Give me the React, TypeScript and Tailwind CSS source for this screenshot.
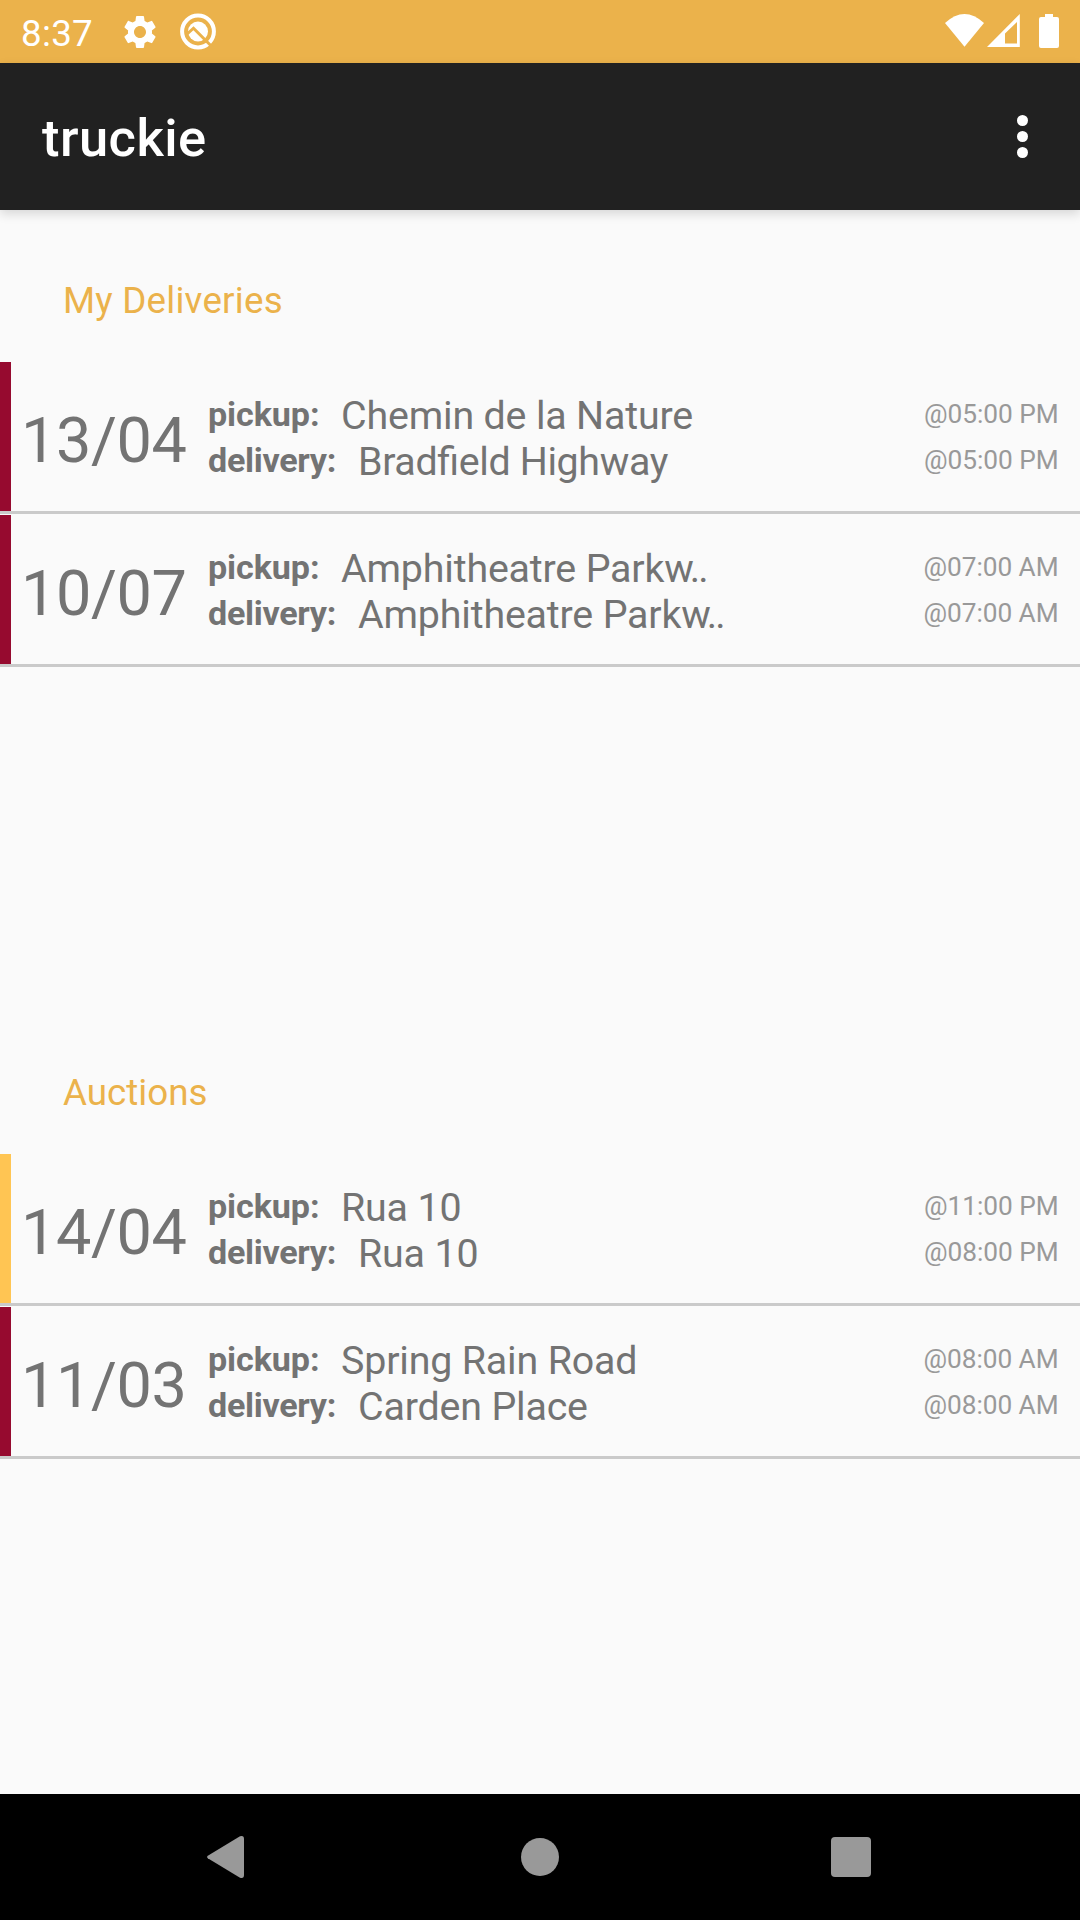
import React from "react";
import { MdSettings } from "react-icons/md";

type Delivery = {
  date: string;
  pickup: string;
  delivery: string;
  pickupTime: string;
  deliveryTime: string;
  accent: string;
};

const RED = "bg-[#960a2f]";
const YELLOW = "bg-[#ffc553]";

const deliveries: Delivery[] = [
  { date: "13/04", pickup: "Chemin de la Nature", delivery: "Bradfield Highway", pickupTime: "@05:00 PM", deliveryTime: "@05:00 PM", accent: RED },
  { date: "10/07", pickup: "Amphitheatre Parkw..", delivery: "Amphitheatre Parkw..", pickupTime: "@07:00 AM", deliveryTime: "@07:00 AM", accent: RED },
];

const auctions: Delivery[] = [
  { date: "14/04", pickup: "Rua 10", delivery: "Rua 10", pickupTime: "@11:00 PM", deliveryTime: "@08:00 PM", accent: YELLOW },
  { date: "11/03", pickup: "Spring Rain Road", delivery: "Carden Place", pickupTime: "@08:00 AM", deliveryTime: "@08:00 AM", accent: RED },
];

function StatusBar() {
  return (
    <header className="flex h-[63px] items-start bg-[#ebb24b] text-white">
      <span className="ml-[21px] mt-[12px] w-[99px] text-[36.75px] leading-[43px] tracking-[0.3px]">8:37</span>
      <MdSettings className="mt-[12px] size-[40px]" />
      <svg className="ml-[14px] mt-[8px] size-[48px]" viewBox="0 0 48 48" fill="none">
        <circle cx="24" cy="23.5" r="15.9" stroke="#fff" strokeWidth="4" />
        <circle cx="24" cy="23.5" r="10" fill="#fff" />
        <path d="M12 27 19.500 20.200 40 40.700" stroke="#ebb24b" strokeWidth="3" />
      </svg>
      <svg className="ml-auto mr-[18px] mt-[12px] h-[40px] w-[120px]" viewBox="0 0 120 40" fill="#fff">
        <path d="M3 11Q22.500-7 42 11L22.500 34.800z" />
        <path fillRule="evenodd" d="M45 35 77.800 2v33zM63 21.500V31.500H75V10z" />
        <path d="M103 2h8v3h4a2 2 0 0 1 2 2v27a2 2 0 0 1-2 2H99a2 2 0 0 1-2-2V7a2 2 0 0 1 2-2h4z" />
      </svg>
    </header>
  );
}

function AppBar() {
  return (
    <div className="relative flex h-[147px] items-center justify-between bg-[#212121] pl-[42px] pr-[52px] text-white shadow-[0_4px_10px_rgba(0,0,0,0.14)]">
      <h1 className="pt-[3px] text-[52.5px] font-medium leading-[62px] tracking-[0.45px]">truckie</h1>
      <div className="flex flex-col gap-[5px]">
        <span className="size-[11px] rounded-full bg-white" />
        <span className="size-[11px] rounded-full bg-white" />
        <span className="size-[11px] rounded-full bg-white" />
      </div>
    </div>
  );
}

/** Street name; a clipped name ends in two tightly set dots. */
function Street({ name }: { name: string }) {
  const clipped = name.endsWith("w..");
  const tracking = name.includes("fi") ? "tracking-[-0.36px]" : "tracking-[-0.17px]";
  return (
    <span className={`mt-px text-[39.375px] [font-feature-settings:'liga'_1] ${tracking}`}>
      {clipped ? name.slice(0, -3) : name}
      {clipped && <span className="tracking-[-1.8px]">w..</span>}
    </span>
  );
}

function Row({ item }: { item: Delivery }) {
  return (
    <li className="mb-px flex h-[152px] border-b-[3px] border-[#cacaca] text-[#737373]">
      <div className={`w-[11px] ${item.accent}`} />
      <div className="w-[197px] pl-[10px] pt-[42px] text-[63px] leading-[74px] tracking-[-0.4px]">{item.date}</div>
      <div className="flex-1 pt-[30px]">
        <div className="flex h-[46px] items-start leading-[46px]">
          <b className="-mt-px w-[133px] text-[34.125px] font-bold tracking-[-0.1px]">pickup:</b>
          <Street name={item.pickup} />
        </div>
        <div className="flex h-[46px] items-start leading-[46px]">
          <b className="-mt-px w-[150px] text-[34.125px] font-bold tracking-[-0.3px]">delivery:</b>
          <Street name={item.delivery} />
        </div>
      </div>
      <div className="pr-[21.5px] pt-[29px] text-right text-[26.25px] leading-[46px] tracking-[-0.06px] text-[#999999]">
        <div>{item.pickupTime}</div>
        <div>{item.deliveryTime}</div>
      </div>
    </li>
  );
}

function Section({ title, items }: { title: string; items: Delivery[] }) {
  return (
    <section className="h-[792px] pt-[69px]">
      <h2 className="h-[83px] pl-[63px] text-[36.75px] leading-[44px] text-[#ebb24b]">
        {title.split(" ").length > 1 ? <span className="tracking-[0.22px]">{title}</span> : title}
      </h2>
      <ul>
        {items.map((item) => (
          <Row key={item.date} item={item} />
        ))}
      </ul>
    </section>
  );
}

function NavBar() {
  return (
    <nav className="flex h-[126px] items-center bg-black">
      <svg className="ml-[206px] h-[44px] w-[39px]" viewBox="0 0 39 44" fill="#999">
        <path d="M1.800 20.700 34 1.300Q38 0 38 4V40Q38 44 34 42.700L1.800 23.300Q0 22 1.800 20.700z" />
      </svg>
      <div className="ml-[276px] size-[38px] rounded-full bg-[#999]" />
      <div className="ml-[272px] size-[40px] rounded-[4px] bg-[#999]" />
    </nav>
  );
}

export default function App() {
  return (
    <div className="flex h-[1920px] w-[1080px] flex-col overflow-hidden bg-[#fafafa] font-[Roboto,sans-serif]">
      <StatusBar />
      <AppBar />
      <main className="h-[1584px]">
        <Section title="My Deliveries" items={deliveries} />
        <Section title="Auctions" items={auctions} />
      </main>
      <NavBar />
    </div>
  );
}
